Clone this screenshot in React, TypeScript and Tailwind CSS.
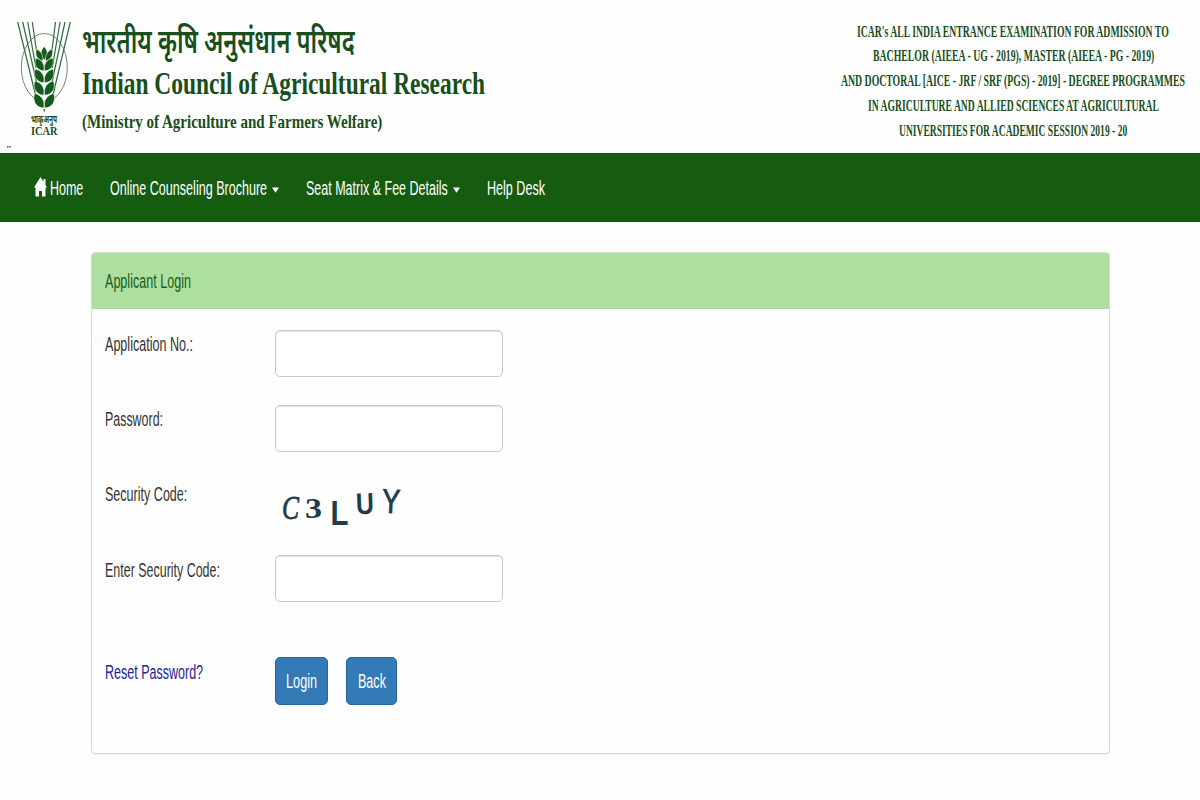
import { useLayoutEffect, useRef, useState } from "react";
import type { ReactNode } from "react";

/** Single line of text condensed or stretched to the width of its box. */
function Fit({ className, children }: { className: string; children: ReactNode }) {
  const box = useRef<HTMLSpanElement>(null);
  const text = useRef<HTMLSpanElement>(null);
  const [scale, setScale] = useState(1);
  useLayoutEffect(() => {
    if (box.current && text.current) {
      setScale(box.current.clientWidth / text.current.offsetWidth);
    }
  }, []);
  return (
    <span ref={box} className={`block shrink-0 whitespace-nowrap ${className}`}>
      <span ref={text} className="inline-block origin-left" style={{ transform: `scaleX(${scale})` }}>
        {children}
      </span>
    </span>
  );
}

const leafRows = [
  { y: 59, s: 0.88 },
  { y: 70, s: 0.94 },
  { y: 82, s: 0.98 },
  { y: 94.5, s: 1 },
];

function Logo() {
  return (
    <svg viewBox="16 20 56 94" className="h-[94px] w-[56px]">
      <g fill="none" stroke="#2f6b3a">
        <ellipse cx="44.3" cy="67.5" rx="23" ry="34" strokeWidth="0.9" stroke="#5b7a60" />
        <path strokeWidth="1.2" d="M17.700 22 L36 97 M22.700 22 L36.500 82 M27.700 22 L36 68 M32.300 22 L37 54 M70.300 22 L52.500 97 M65 22 L52 82 M60 22 L52.300 68 M55.500 22 L51.500 54" />
      </g>
      <g fill="#135a1b" stroke="#fefefe" strokeWidth="0.5">
        <path d="M44.200 46.500 C39.800 51 40.500 56 44.200 60 C47.800 56 48.500 51 44.200 46.500Z" />
        <path d="M36.500 49 C34.500 55 37 59 42.800 61 C43.500 56 41.500 51.500 36.500 49Z" />
        <path d="M51.900 49 C53.900 55 51.400 59 45.600 61 C44.900 56 46.900 51.500 51.900 49Z" />
        {leafRows.map(({ y, s }) => (
          <g key={y} transform={`translate(44.2 ${y}) scale(${s})`}>
            <path d="M-9.500 -1 C-12 6 -8.500 13 -0.600 13.500 C1 6.500 -2.500 0.500 -9.500 -1Z" />
            <path d="M9.500 -1 C12 6 8.500 13 0.600 13.500 C-1 6.500 2.500 0.500 9.500 -1Z" />
          </g>
        ))}
        <path stroke="none" d="M43.700 109 h1.200 v2.500 h-1.200z" />
      </g>
    </svg>
  );
}

function Caret() {
  return (
    <svg viewBox="0 0 8 6" className="h-[6px] w-[7px] shrink-0 translate-y-px fill-white">
      <path d="M0 0 H8 L4 6Z" />
    </svg>
  );
}

function Captcha() {
  return (
    <svg viewBox="275 480 140 60" className="h-[60px] w-[140px] overflow-visible" fill="#1d3c4d">
      <text x="282" y="519" fontFamily="Liberation Serif" fontStyle="italic" fontSize="34" stroke="#1d3c4d" strokeWidth="0.8" textLength="17" lengthAdjust="spacingAndGlyphs">C</text>
      <text x="305" y="518" fontFamily="Liberation Serif" fontWeight="700" fontSize="30" textLength="17" lengthAdjust="spacingAndGlyphs">3</text>
      <text x="330.500" y="525" fontFamily="Liberation Sans" fontWeight="700" fontSize="35" textLength="18" lengthAdjust="spacingAndGlyphs">L</text>
      <text x="356" y="514" fontFamily="Liberation Sans" fontWeight="700" fontSize="30" textLength="18" lengthAdjust="spacingAndGlyphs" transform="rotate(-2 365 505)">U</text>
      <text x="382" y="513" fontFamily="Liberation Sans" fontSize="34" stroke="#1d3c4d" strokeWidth="0.9" textLength="18" lengthAdjust="spacingAndGlyphs" transform="rotate(3 391 501)">Y</text>
    </svg>
  );
}

const label = "h-[26px] text-[19.3px] leading-[26px] text-[#333]";
const input =
  "h-[47px] w-[228px] rounded-[5px] border border-[#c8c8c8] bg-white px-3 text-[19px] shadow-[inset_0_1px_1px_rgba(0,0,0,0.12)] outline-none";
const button =
  "flex h-[48px] items-center justify-center rounded-[5px] border border-[#27659c] bg-[#337ab7] pt-[2px] text-[19.3px] leading-[26px] text-white";

export default function App() {
  return (
    <div className="h-[800px] w-[1200px] overflow-hidden bg-[#fefefe] font-['Liberation_Sans',sans-serif]">
      <header className="relative flex h-[153px] justify-between font-['Liberation_Serif',serif] font-bold text-[#184f1c]">
        <div className="flex">
          <div className="flex w-[82px] flex-col pl-4 pt-5">
            <Logo />
            <Fit className="ml-[15px] -mt-px h-[11px] w-[26px] font-['Noto_Sans',sans-serif] text-[11px] leading-[11px]">भाकृअनुप</Fit>
            <Fit className="ml-[15px] mt-px h-[12px] w-[26px] text-[11.5px] leading-[12px]">ICAR</Fit>
          </div>
          <div className="flex flex-col pt-[23px]">
            <Fit className="h-[40px] w-[273px] -translate-y-[2px] font-['Noto_Sans',sans-serif] text-[33px] font-semibold leading-[40px]">भारतीय कृषि अनुसंधान परिषद</Fit>
            <Fit className="h-[40px] w-[403px] text-[32.5px] leading-[40px]">Indian Council of Agricultural Research</Fit>
            <Fit className="mt-1 h-[30px] w-[300px] text-[19.5px] leading-[30px]">(Ministry of Agriculture and Farmers Welfare)</Fit>
          </div>
        </div>
        <div className="mr-[15px] flex w-[344px] flex-col items-center pt-[19.6px] text-[16px] leading-[24.8px]">
          <Fit className="h-[24.8px] w-[312px]">ICAR's ALL INDIA ENTRANCE EXAMINATION FOR ADMISSION TO</Fit>
          <Fit className="h-[24.8px] w-[281px]">BACHELOR (AIEEA - UG - 2019), MASTER (AIEEA - PG - 2019)</Fit>
          <Fit className="h-[24.8px] w-[344px]">AND DOCTORAL [AICE - JRF / SRF (PGS) - 2019] - DEGREE PROGRAMMES</Fit>
          <Fit className="h-[24.8px] w-[291px]">IN AGRICULTURE AND ALLIED SCIENCES AT AGRICULTURAL</Fit>
          <Fit className="h-[24.8px] w-[228px]">UNIVERSITIES FOR ACADEMIC SESSION 2019 - 20</Fit>
        </div>
        <svg viewBox="0 0 4 2" className="absolute left-[7px] top-[146px] h-[2px] w-[4px] fill-[#555]">
          <path d="M0 0h1.500v1.500h-1.500z M2.300 0h1.500v1.500h-1.500z" />
        </svg>
      </header>

      <nav className="flex h-[69px] items-center border-y border-[#1c461a] bg-[#165c10] pl-[34px] pt-[2px] text-[19.3px] leading-[26px] text-white">
        <svg viewBox="0 0 13 20" className="mr-[3px] h-[20px] w-[13px] shrink-0 -translate-y-[2px] fill-white">
          <path d="M6.500 0 L13 10.500 H11.500 V19.500 H8 V14 H5 V19.500 H1.500 V10.500 H0Z M9.500 2 h2 v6 l-2 -3z" />
        </svg>
        <Fit className="w-[33px]">Home</Fit>
        <Fit className="ml-[27px] w-[157px]">Online Counseling Brochure</Fit>
        <span className="ml-[5px] flex"><Caret /></span>
        <Fit className="ml-[27px] w-[142px]">Seat Matrix &amp; Fee Details</Fit>
        <span className="ml-[5px] flex"><Caret /></span>
        <Fit className="ml-[27px] w-[58px]">Help Desk</Fit>
      </nav>

      <main className="ml-[91px] mt-[30px] h-[502px] w-[1019px] rounded-[4px] border border-[#d5dccb] bg-[#fefefe] shadow-[0_1px_1px_rgba(0,0,0,0.05)]">
        <div className="flex h-[56px] items-center rounded-t-[3px] border-b border-[#b4d8a8] bg-[#addfa0] pl-[13px] pt-[3px] text-[19.3px] leading-[26px] text-[#17611a]">
          <Fit className="w-[86px]">Applicant Login</Fit>
        </div>
        <form className="flex flex-col pl-[13px] pt-[21px]">
          <div className="flex h-[75px]">
            <div className="w-[169.5px] pt-[2px]"><Fit className={`${label} w-[88px]`}>Application No.:</Fit></div>
            <input className={input} />
          </div>
          <div className="flex h-[75px]">
            <div className="w-[169.5px] pt-[2px]"><Fit className={`${label} w-[58px]`}>Password:</Fit></div>
            <input type="password" className={input} />
          </div>
          <div className="flex h-[75px]">
            <div className="w-[169.5px] pt-[2px]"><Fit className={`${label} w-[82px]`}>Security Code:</Fit></div>
            <Captcha />
          </div>
          <div className="flex h-[102px]">
            <div className="w-[169.5px] pt-[3px]"><Fit className={`${label} w-[115px]`}>Enter Security Code:</Fit></div>
            <input className={input} />
          </div>
          <div className="flex">
            <div className="w-[169.5px] pt-[3px]"><Fit className="h-[26px] w-[98px] text-[19.3px] leading-[26px] text-[#23239a]">Reset Password?</Fit></div>
            <button type="button" className={`${button} w-[53px]`}><Fit className="w-[31px]">Login</Fit></button>
            <button type="button" className={`${button} ml-[18.5px] w-[51px]`}><Fit className="w-[28px]">Back</Fit></button>
          </div>
        </form>
      </main>
    </div>
  );
}
